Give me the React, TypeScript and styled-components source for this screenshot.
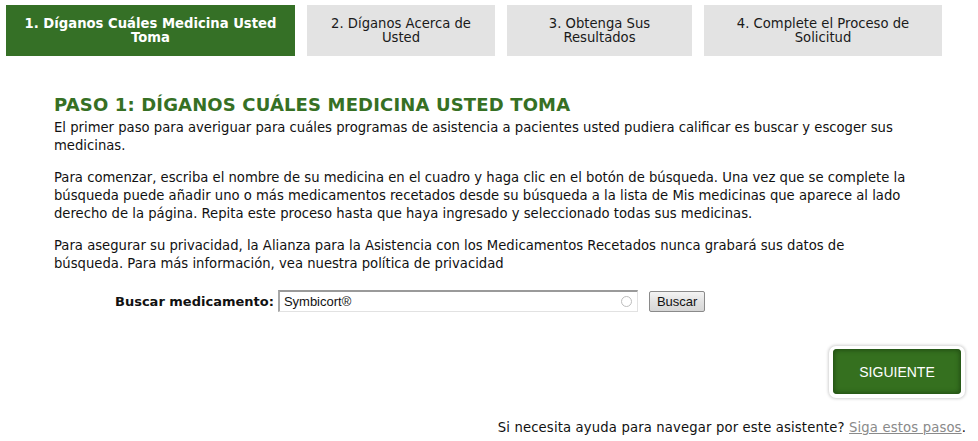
import React from "react";
import styled, { createGlobalStyle } from "styled-components";

const Global = createGlobalStyle`
  html, body { margin: 0; padding: 0; background: #fff; }
  body { font-family: "DejaVu Sans", Verdana, sans-serif; font-size: 13.2px; color: #111; }
`;

const Page = styled.div`
  width: 978px;
  height: 441px;
  box-sizing: border-box;
  padding: 5px 0 0 6px;
  overflow: hidden;
`;

const Tabs = styled.div`
  display: flex;
  gap: 12px;
`;

const Tab = styled.div<{ $w: number; $active?: boolean }>`
  width: ${(p) => p.$w}px;
  height: 51px;
  box-sizing: border-box;
  display: flex;
  align-items: center;
  justify-content: center;
  text-align: center;
  padding: 0 14px;
  font-size: 13.2px;
  line-height: 14px;
  background: ${(p) => (p.$active ? "#357026" : "#e3e3e3")};
  color: ${(p) => (p.$active ? "#fff" : "#1a1a1a")};
  font-weight: ${(p) => (p.$active ? 700 : 400)};
`;

const Content = styled.div`
  width: 856px;
  margin: 38px 0 0 48px;
`;

const Heading = styled.h1`
  margin: 0 0 3px;
  font-size: 18px;
  line-height: 22px;
  font-weight: 700;
  color: #367024;
  letter-spacing: 0.15px;
`;

const Para = styled.p`
  margin: 0 0 14px;
  font-size: 13.2px;
  line-height: 18px;
  color: #111;
`;

const SearchRow = styled.div`
  display: flex;
  align-items: center;
  margin: 17px 0 0 109px;
`;

const Label = styled.label`
  font-weight: 700;
  font-size: 13px;
  margin-right: 4px;
`;

const InputWrap = styled.div`
  position: relative;
  width: 360px;
  height: 22px;
  box-sizing: border-box;
  border: 1px solid #e2e2e2;
  border-top: 2px solid #9a9a9a;
  border-left: 2px solid #a8a8a8;
  display: flex;
  align-items: center;
  padding-left: 4px;
  font-family: "Liberation Sans", Arial, sans-serif;
  font-size: 13px;
  color: #111;
`;

const Spinner = styled.span`
  position: absolute;
  right: 5px;
  top: 4px;
  width: 9px;
  height: 9px;
  border-radius: 50%;
  border: 1.5px solid #bdbdbd;
`;

const SmallButton = styled.button`
  margin-left: 11px;
  height: 21px;
  padding: 0 7px;
  font-family: "Liberation Sans", Arial, sans-serif;
  font-size: 13px;
  color: #111;
  border: 1px solid #8a8a8a;
  border-radius: 2px;
  background: linear-gradient(#f4f4f4, #e2e2e2 50%, #d6d6d6);
`;

const NextRow = styled.div`
  display: flex;
  justify-content: flex-end;
  margin: 34px 13px 0 0;
`;

const NextOuter = styled.div`
  padding: 3px 4px 4px;
  background: #fff;
  border-radius: 7px;
  box-shadow: 0 0 3px 1px rgba(0, 0, 0, 0.18);
`;

const NextButton = styled.button`
  width: 128px;
  height: 45px;
  border: none;
  border-radius: 4px;
  background: #35701f;
  box-shadow: inset 0 0 5px 1px #1f4a12;
  color: #fff;
  font-family: "Liberation Sans", Arial, sans-serif;
  font-size: 14px;
`;

const Footer = styled.div`
  text-align: right;
  margin: 21px 12px 0 0;
  font-size: 13.2px;
  line-height: 18px;
  letter-spacing: 0.15px;
  color: #111;
`;

const HelpLink = styled.a`
  color: #8a8a8a;
  text-decoration: underline;
`;

export default function App() {
  return (
    <Page>
      <Global />
      <Tabs>
        <Tab $w={289} $active>1. Díganos Cuáles Medicina Usted Toma</Tab>
        <Tab $w={188}>2. Díganos Acerca de Usted</Tab>
        <Tab $w={185}>3. Obtenga Sus Resultados</Tab>
        <Tab $w={238}>4. Complete el Proceso de Solicitud</Tab>
      </Tabs>
      <Content>
        <Heading>PASO 1: DÍGANOS CUÁLES MEDICINA USTED TOMA</Heading>
        <Para>
          El primer paso para averiguar para cuáles programas de asistencia a pacientes usted pudiera calificar es buscar y escoger sus medicinas.
        </Para>
        <Para>
          Para comenzar, escriba el nombre de su medicina en el cuadro y haga clic en el botón de búsqueda. Una vez que se complete la búsqueda puede añadir uno o más medicamentos recetados desde su búsqueda a la lista de Mis medicinas que aparece al lado derecho de la página. Repita este proceso hasta que haya ingresado y seleccionado todas sus medicinas.
        </Para>
        <Para>
          Para asegurar su privacidad, la Alianza para la Asistencia con los Medicamentos Recetados nunca grabará sus datos de búsqueda. Para más información, vea nuestra política de privacidad
        </Para>
      </Content>
      <SearchRow>
        <Label>Buscar medicamento:</Label>
        <InputWrap>
          Symbicort®
          <Spinner />
        </InputWrap>
        <SmallButton>Buscar</SmallButton>
      </SearchRow>
      <NextRow>
        <NextOuter>
          <NextButton>SIGUIENTE</NextButton>
        </NextOuter>
      </NextRow>
      <Footer>
        Si necesita ayuda para navegar por este asistente? <HelpLink>Siga estos pasos</HelpLink>.
      </Footer>
    </Page>
  );
}
